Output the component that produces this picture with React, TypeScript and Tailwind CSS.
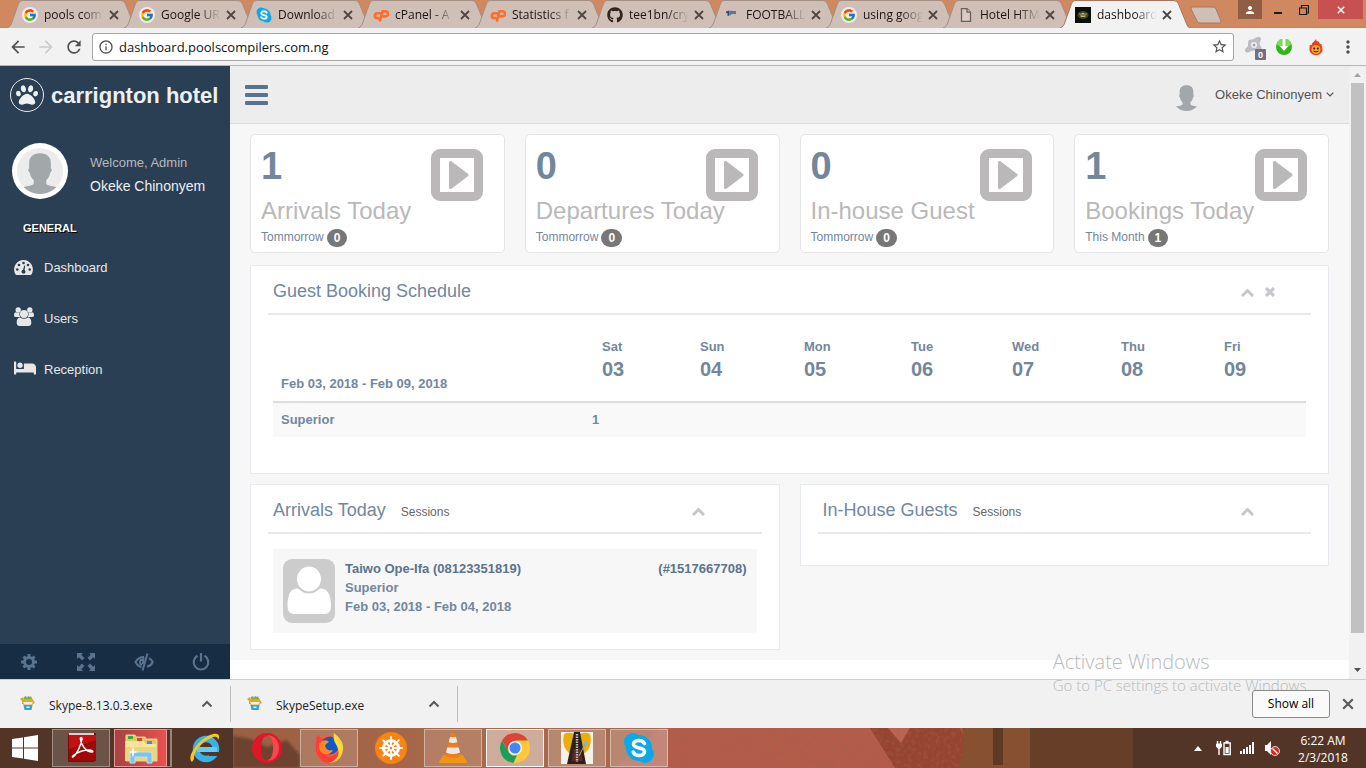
import React from "react";
import { FcGoogle } from "react-icons/fc";
import { FaGithub, FaPaw, FaBed } from "react-icons/fa";
import {
  MdArrowBack,
  MdArrowForward,
  MdRefresh,
  MdInfoOutline,
  MdStarBorder,
  MdMoreVert,
  MdPerson,
} from "react-icons/md";

type TabInfo = { title: string; icon: React.ReactNode; active?: boolean };

const GoogleMark = () => (
  <span className="flex size-4 items-center justify-center rounded-full bg-[#f3ece8]">
    <FcGoogle className="size-[14px]" />
  </span>
);

const SkypeMark = ({ className }: { className: string }) => (
  <svg viewBox="0 0 32 32" className={className} aria-hidden="true">
    <circle cx="10" cy="10" r="9" fill="#0aa9e8" />
    <circle cx="22" cy="22" r="9" fill="#0aa9e8" />
    <circle cx="16" cy="16" r="13" fill="#0aa9e8" />
    <path
      d="M21.500 11.500c-1-2-3.200-3-5.700-3-3 0-5.300 1.400-5.300 3.800 0 5 11 2.500 11 7.200 0 2.500-2.300 4-5.500 4-2.800 0-4.700-1.200-5.700-3.300"
      fill="none"
      stroke="#fff"
      strokeWidth="3.600"
      strokeLinecap="round"
    />
  </svg>
);

const CpanelMark = () => (
  <svg viewBox="0 0 16 16" className="size-4" fill="none" stroke="#ff6c2c" strokeWidth="2.600" aria-hidden="true">
    <path d="M7 6.300H4.200a2.400 2.400 0 0 0 0 4.800H5.500" strokeLinecap="round" />
    <path d="M7 13.500 9.400 4.200h3a2.300 2.300 0 0 1 0 5.200h-2" strokeLinecap="round" strokeLinejoin="round" />
  </svg>
);

const FlagMark = () => (
  <svg viewBox="0 0 16 16" className="size-4" aria-hidden="true">
    <path d="M2 4.500 5.500 3.500v5L3.500 9V6L2 6z" fill="#2c4a6b" />
    <path d="M6 4c2-1 4 .5 6 0v3c-2 .5-3-.5-5 .5l-1 1z" fill="#5b7899" />
  </svg>
);

const DocMark = () => (
  <svg viewBox="0 0 16 16" className="size-4" fill="#d9cdc6" stroke="#6b605b" strokeWidth="1.300" aria-hidden="true">
    <path d="M3.500 1.700h5.500l3.500 3.500v9.100h-9z" />
    <path d="M9 1.700v3.500h3.500" />
  </svg>
);

const SiteMark = () => (
  <svg viewBox="0 0 16 16" className="size-4" aria-hidden="true">
    <rect width="16" height="16" fill="#0a0f0a" />
    <ellipse cx="8" cy="8" rx="5.500" ry="4" fill="#3d4723" />
    <path d="M4.500 6l1.500 1L8 5.500 10 7l1.500-1v1.500h-7zM5 8.500h6l-1 1.500H6z" fill="#c9b777" />
  </svg>
);

const tabs: TabInfo[] = [
  { title: "pools com", icon: <GoogleMark /> },
  { title: "Google UR", icon: <GoogleMark /> },
  { title: "Download", icon: <SkypeMark className="size-4" /> },
  { title: "cPanel - A", icon: <CpanelMark /> },
  { title: "Statistics f", icon: <CpanelMark /> },
  { title: "tee1bn/cry", icon: <FaGithub className="size-4 text-[#33241d]" /> },
  { title: "FOOTBALL", icon: <FlagMark /> },
  { title: "using goog", icon: <GoogleMark /> },
  { title: "Hotel HTM", icon: <DocMark /> },
  { title: "dashboard", icon: <SiteMark />, active: true },
];

function CrossIcon({ className }: { className: string }) {
  return (
    <svg viewBox="0 0 10 10" className={className} fill="none" stroke="currentColor" aria-hidden="true">
      <path d="M1 1l8 8M9 1l-8 8" strokeWidth="1.800" />
    </svg>
  );
}

function BrowserTab({ tab }: { tab: TabInfo }) {
  return (
    <div className={tab.active ? "relative z-10 -mr-[13px] h-7 w-[130px] shrink-0" : "relative -mr-[13px] h-7 w-[130px] shrink-0"}>
      <svg viewBox="0 0 130 28" className="absolute inset-0 size-full" aria-hidden="true">
        <path
          d="M0 28C3 27 4 25 5 22L11 5Q12 .5 15 .5H114Q117 .5 118.500 4L127 25Q128 27.500 130 28"
          fill={tab.active ? "#f2f2f2" : "#d0bfb6"}
          stroke={tab.active ? "#a8765c" : "#a58e83"}
        />
      </svg>
      <div className="relative flex h-full items-center pt-[2px] pr-[18px] pl-[15px]">
        <span className="shrink-0">{tab.icon}</span>
        <button className="ml-[6px] w-[63px] shrink-0 text-left text-[12px] whitespace-nowrap text-[#1c1411] [mask-image:linear-gradient(90deg,#000_60%,transparent_95%)]">
          {tab.title}
        </button>
        <button aria-label="Close tab" className="ml-auto text-[#4f4642]">
          <CrossIcon className="size-[10px]" />
        </button>
      </div>
    </div>
  );
}

function BrowserChrome() {
  return (
    <header className="shrink-0">
      <div className="flex h-7 items-start border-b border-[#a08d84] bg-[#d08861] pl-[7px]">
        {tabs.map((t) => (
          <BrowserTab key={t.title} tab={t} />
        ))}
        <button aria-label="New tab" className="mt-[6px] ml-[12px]">
          <svg viewBox="0 0 34 18" className="h-[18px] w-[34px]" aria-hidden="true">
            <path d="M3 1h21q2 0 3 2l5 12q.5 2-1.500 2H11q-2 0-3-2L2 3q-.5-2 1-2z" fill="#d0bfb6" stroke="#a8795f" />
          </svg>
        </button>
        <div className="ml-auto flex h-[19px] items-center pr-[3px]">
          <button aria-label="Profile" className="flex h-full w-6 items-center justify-center bg-[#8f5e44] text-white">
            <MdPerson className="size-3" />
          </button>
          <button aria-label="Minimize" className="flex h-full w-7 items-center justify-center pl-1 text-[#1a1a1a]">
            <svg viewBox="0 0 8 10" className="h-[10px] w-2" aria-hidden="true">
              <path d="M0 8h8" stroke="currentColor" strokeWidth="2" />
            </svg>
          </button>
          <button aria-label="Restore" className="flex h-full w-7 items-center justify-center text-[#1a1a1a]">
            <svg viewBox="0 0 10 10" className="size-[10px]" fill="none" stroke="currentColor" aria-hidden="true">
              <path d="M.5 3h7v6.500h-7zM2.500 3V.5h7V8h-2" strokeWidth="1.200" />
            </svg>
          </button>
          <button aria-label="Close" className="flex h-full w-[45px] items-center justify-center bg-[#c75050] text-white">
            <CrossIcon className="size-2" />
          </button>
        </div>
      </div>

      <div className="flex h-[38px] items-center border-b border-[#b5b5b5] bg-[#f2f2f2] pl-2">
        <button aria-label="Back" className="text-[#505050]">
          <MdArrowBack className="size-5" />
        </button>
        <button aria-label="Forward" className="ml-2 text-[#cccccc]">
          <MdArrowForward className="size-5" />
        </button>
        <button aria-label="Reload" className="ml-2 text-[#505050]">
          <MdRefresh className="size-5" />
        </button>
        <div className="ml-2 flex h-7 flex-1 items-center rounded-[3px] border border-[#a5a5a5] bg-white px-[5px]">
          <MdInfoOutline className="size-4 text-[#555555]" />
          <input
            aria-label="Address"
            defaultValue="dashboard.poolscompilers.com.ng"
            className="ml-[5px] flex-1 bg-transparent pt-[2px] text-[13px] text-[#111111] outline-none"
          />
          <button aria-label="Bookmark" className="text-[#505050]">
            <MdStarBorder className="size-[17px]" />
          </button>
        </div>
        <div className="flex items-center gap-[10px] pr-2 pl-[10px]">
          <button aria-label="Avast extension">
            <svg viewBox="0 0 22 24" className="mt-[2px] h-6 w-[22px]" aria-hidden="true">
              <path d="M5 4c2 0 3-1 5-1 2-2 7-3 7 0 0 2-2 3-1 6l2 4-5 1c-2 0-3 1-6 1-2 2-7 2-6-1 0-2 3-2 3-5 0-2 0-4 1-5z" fill="#bcbcc6" />
              <circle cx="10" cy="9" r="3" fill="#f2f2f2" />
              <circle cx="10" cy="9" r="1.500" fill="#a5a5b2" />
              <rect x="11" y="13" width="11" height="11" rx="1" fill="#716f80" />
              <text x="14" y="22" fontSize="9" fontWeight="700" fill="#fff" fontFamily="Liberation Sans, sans-serif">0</text>
            </svg>
          </button>
          <button aria-label="Download extension">
            <svg viewBox="0 0 16 16" className="size-4" aria-hidden="true">
              <circle cx="8" cy="8" r="8" fill="#35b51c" />
              <path d="M1 6a7 7 0 0 1 14 0q-7 4-14 0z" fill="#7ddb55" />
              <path d="M6.600 0h2.800v7h3L8 12 3.600 7h3z" fill="#fff" />
            </svg>
          </button>
          <button aria-label="Fire extension" className="ml-[6px]">
            <svg viewBox="0 0 16 16" className="size-4" aria-hidden="true">
              <path d="M8 0c0 2 2 3 3 2.500 0 2 1 3 3 3-1 1 .5 3 .5 5 0 3.500-3 5.500-6.500 5.500s-6.500-2-6.500-5.500c0-2 0-3 .5-5 1 1 2 1 2-1C5 3 7 2 8 0z" fill="#e4431b" />
              <circle cx="8" cy="10.500" r="4.500" fill="#fda52a" />
              <circle cx="6.200" cy="9.500" r="1" fill="#451506" />
              <circle cx="9.800" cy="9.500" r="1" fill="#451506" />
              <path d="M5.500 12q2.500 2 5 0" stroke="#451506" fill="none" />
            </svg>
          </button>
          <button aria-label="Menu" className="ml-1 text-[#505050]">
            <MdMoreVert className="size-5" />
          </button>
        </div>
      </div>
    </header>
  );
}

function Silhouette({ className }: { className: string }) {
  return (
    <svg viewBox="0 0 48 48" className={className} aria-hidden="true">
      <path
        d="M24 5.500c-7.500 0-11.300 4-11.300 10.500v5c-1.400.3-1.200 3.500.6 4.500.6 3.500 1.600 5.500 4.200 8v3.500c-1 3-12 2.500-15 6V48h43v-5c-3-3.500-14-3-15-6v-3.500c2.600-2.500 3.600-4.500 4.200-8 1.800-1 2-4.200.6-4.500v-5C35.300 9.500 31.500 5.500 24 5.500z"
        fill="#a2a7aa"
      />
    </svg>
  );
}

const DialIcon = () => (
  <svg viewBox="0 0 19 15" className="h-[15px] w-[19px]" aria-hidden="true">
    <path d="M9.500 0a9.400 9.400 0 0 0-8.200 14q.4 1 1.300 1h13.800q.9 0 1.300-1A9.400 9.400 0 0 0 9.500 0z" fill="#e7e7e7" />
    <g fill="#2a3f54">
      <circle cx="3.300" cy="9.500" r="1.300" />
      <circle cx="5" cy="5" r="1.300" />
      <circle cx="9.500" cy="3" r="1.300" />
      <circle cx="14" cy="5" r="1.300" />
      <circle cx="15.700" cy="9.500" r="1.300" />
      <path d="M10.200 5.500l1 .3-.6 4.200a2 2 0 1 1-1.500-.3z" />
    </g>
  </svg>
);

const UsersIcon = () => (
  <svg viewBox="0 0 20 19" className="mb-1 h-[19px] w-5" fill="#e7e7e7" aria-hidden="true">
    <circle cx="4.200" cy="3" r="2.700" />
    <circle cx="15.800" cy="3" r="2.700" />
    <path d="M0 8.500C0 6.500.8 5.300 2 5.300q2 1 3.600.3Q5 8.500 6.200 10H2Q0 10 0 8.500zM20 8.500c0-2-.8-3.200-2-3.200q-2 1-3.600.3.600 2.900-.6 4.400H18q2 0 2-1.500z" />
    <circle cx="10" cy="7" r="4" />
    <path d="M2.700 15.500c0-3 1-5 3.300-5q4 2.500 8 0c2.300 0 3.300 2 3.300 5q0 3.500-3 3.500H5.700q-3 0-3-3.500z" />
  </svg>
);

const menu = [
  { label: "Dashboard", icon: <DialIcon /> },
  { label: "Users", icon: <UsersIcon /> },
  { label: "Reception", icon: <FaBed className="mb-1 h-[18px] w-[22px] text-[#e7e7e7]" /> },
];

function Sidebar() {
  return (
    <aside className="flex w-[230px] shrink-0 flex-col bg-[#2a3f54] text-[#ecf0f1]">
      <a href="#home" className="flex h-[58px] items-center pl-[10px]">
        <span className="flex size-[34px] shrink-0 items-center justify-center rounded-full border border-[#eaeaea]">
          <FaPaw className="size-[22px]" />
        </span>
        <span className="ml-[7px] text-[22px] font-bold whitespace-nowrap">carrignton hotel</span>
      </a>
      <div className="mt-[19px] flex items-center pl-3">
        <span className="flex size-14 items-center justify-center rounded-full bg-white p-[5px]">
          <Silhouette className="size-full rounded-full bg-[#ececec]" />
        </span>
        <div className="mt-[7px] ml-[22px]">
          <p className="text-[13px] leading-[22px] text-[#bab8b8]">Welcome, Admin</p>
          <p className="text-[14px] leading-6">Okeke Chinonyem</p>
        </div>
      </div>
      <nav>
        <h3 className="mt-[21px] pl-[23px] text-[11px] leading-4 font-bold text-white uppercase [text-shadow:1px_1px_#000]">General</h3>
        <ul className="mt-[6px]">
          {menu.map((m) => (
            <li key={m.label}>
              <a href={"#" + m.label} className="flex h-[51px] items-center pl-[14px] text-[13px] text-[#e7e7e7]">
                <span className="w-[30px]">{m.icon}</span>
                {m.label}
              </a>
            </li>
          ))}
        </ul>
      </nav>
      <div className="mt-auto grid h-[35px] grid-cols-4 bg-[#172d44] text-[#5a738e]">
        <button aria-label="Settings" className="flex items-center justify-center">
          <svg viewBox="0 0 18 18" className="size-[18px]" aria-hidden="true">
            <g stroke="currentColor" strokeWidth="3">
              <path d="M9 1v16M1 9h16M3.500 3.500l11 11M14.500 3.500l-11 11" />
            </g>
            <circle cx="9" cy="9" r="6" fill="currentColor" />
            <circle cx="9" cy="9" r="3" fill="#172d44" />
          </svg>
        </button>
        <button aria-label="FullScreen" className="flex items-center justify-center">
          <svg viewBox="0 0 18 18" className="size-[18px]" aria-hidden="true">
            <path
              d="M0 0h6L4.300 1.800 7.500 5 5 7.500 1.800 4.300 0 6zM18 0h-6l1.700 1.800L10.500 5 13 7.500l3.200-3.200L18 6zM0 18h6l-1.700-1.800L7.500 13 5 10.500l-3.200 3.200L0 12zM18 18h-6l1.700-1.800-3.200-3.200 2.500-2.500 3.200 3.200L18 12z"
              fill="currentColor"
            />
          </svg>
        </button>
        <button aria-label="Lock" className="flex items-center justify-center">
          <svg viewBox="0 0 20 18" className="h-[18px] w-5" fill="none" stroke="currentColor" strokeWidth="2" aria-hidden="true">
            <path d="M10 4Q4.500 4 1.500 9q2.200 4.300 6 5M15 5.200Q17.500 6.700 18.800 9q-1.800 3.800-5.800 4.800" />
            <path d="M13.500.5L8.500 17.500" />
            <path d="M9 6.500q-3 0-3 2.800 0 2 2 2.700M9.500 4.500L9 11" />
          </svg>
        </button>
        <button aria-label="Logout" className="flex items-center justify-center">
          <svg viewBox="0 0 18 18" className="size-[18px]" fill="none" stroke="currentColor" strokeWidth="2.200" aria-hidden="true">
            <path d="M5.500 2.800a7.300 7.300 0 1 0 7 0" />
            <path d="M9 0v8.500" />
          </svg>
        </button>
      </div>
    </aside>
  );
}

const stats = [
  { value: 1, label: "Arrivals Today", note: "Tommorrow", badge: 0 },
  { value: 0, label: "Departures Today", note: "Tommorrow", badge: 0 },
  { value: 0, label: "In-house Guest", note: "Tommorrow", badge: 0 },
  { value: 1, label: "Bookings Today", note: "This Month", badge: 1 },
];

function StatCard({ value, label, note, badge }: (typeof stats)[number]) {
  return (
    <section className="relative h-[119px] rounded-[5px] border border-[#e4e4e4] bg-white px-[10px] pt-[11px]">
      <svg viewBox="0 0 52 52" className="absolute top-[14px] right-[21px] size-[52px]" aria-hidden="true">
        <rect x="4.500" y="4.500" width="43" height="43" rx="4.500" fill="none" stroke="#bab8b8" strokeWidth="9" />
        <path d="M19.500 13.500v25L36 26z" fill="#bab8b8" stroke="#bab8b8" strokeWidth="3" strokeLinejoin="round" />
      </svg>
      <div className="text-[38px] leading-10 font-bold">{value}</div>
      <h3 className="relative mt-[10px] text-[24px] leading-[30px] whitespace-nowrap text-[#bab8b8]">{label}</h3>
      <p className="mt-[2px] flex items-start gap-[3px] text-[12px] leading-[18px]">
        {note}
        <span className="mt-[1px] rounded-[10px] bg-[#777777] px-[7px] font-bold text-white">{badge}</span>
      </p>
    </section>
  );
}

function Panel(props: { title: string; sub?: string; closable?: boolean; className: string; children?: React.ReactNode }) {
  return (
    <section className={props.className}>
      <div className="flex h-[39px] border-b-2 border-[#e6e9ed] pl-[5px]">
        <h2 className="text-[18px] leading-[30px] whitespace-nowrap">
          {props.title}
          {props.sub && <small className="ml-[15px] text-[12px] text-[#666666]">{props.sub}</small>}
        </h2>
        <div className="ml-auto flex h-8 w-[70px] items-center gap-[11px] text-[#c5c7cb]">
          <button aria-label="Collapse">
            <svg viewBox="0 0 13 9" className="h-[9px] w-[13px]" fill="none" stroke="currentColor" strokeWidth="3" aria-hidden="true">
              <path d="M1 8l5.500-5.500L12 8" />
            </svg>
          </button>
          {props.closable && (
            <button aria-label="Close">
              <svg viewBox="0 0 10 10" className="size-[10px]" fill="none" stroke="currentColor" strokeWidth="3.200" aria-hidden="true">
                <path d="M1 1l8 8M9 1L1 9" />
              </svg>
            </button>
          )}
        </div>
      </div>
      <div className="px-[5px]">{props.children}</div>
    </section>
  );
}

const days = [
  { day: "Sat", date: "03", count: "1" },
  { day: "Sun", date: "04", count: "" },
  { day: "Mon", date: "05", count: "" },
  { day: "Tue", date: "06", count: "" },
  { day: "Wed", date: "07", count: "" },
  { day: "Thu", date: "08", count: "" },
  { day: "Fri", date: "09", count: "" },
];

function Schedule() {
  return (
    <table className="mt-[14px] w-full table-fixed text-left text-[13px] font-bold">
      <colgroup>
        <col className="w-[311px]" />
        <col className="w-[98px]" />
        <col className="w-[104px]" />
        <col className="w-[107px]" />
        <col className="w-[101px]" />
        <col className="w-[109px]" />
        <col className="w-[103px]" />
        <col className="w-[100px]" />
      </colgroup>
      <thead>
        <tr className="h-[73px] border-b-2 border-[#dddddd]">
          <th className="px-2 pb-2 align-bottom">Feb 03, 2018 - Feb 09, 2018</th>
          {days.map((d) => (
            <th key={d.day} className="pl-[18px] align-top">
              <div className="pt-2 leading-5">{d.day}</div>
              <div className="text-[20px] leading-6">{d.date}</div>
            </th>
          ))}
        </tr>
      </thead>
      <tbody>
        <tr className="h-[35px] bg-[#f9f9f9]">
          <td className="px-2">Superior</td>
          {days.map((d) => (
            <td key={d.day} className="px-2">{d.count}</td>
          ))}
        </tr>
      </tbody>
    </table>
  );
}

function Dashboard() {
  return (
    <main className="flex min-w-0 flex-1 flex-col bg-white text-[#73879c]">
      <div className="flex h-[58px] shrink-0 items-center border-b border-[#d9dee4] bg-[#ededed] px-[15px]">
        <button aria-label="Toggle menu" className="text-[#5a738e]">
          <svg viewBox="0 0 23 20" className="h-5 w-[23px]" fill="currentColor" aria-hidden="true">
            <rect width="23" height="4" rx="1" />
            <rect y="8" width="23" height="4" rx="1" />
            <rect y="16" width="23" height="4" rx="1" />
          </svg>
        </button>
        <button className="ml-auto flex items-center text-[13px] text-[#515356]">
          <Silhouette className="mt-1 mr-[14px] size-[29px] rounded-full" />
          Okeke Chinonyem
          <svg viewBox="0 0 8 5" className="ml-1 h-[5px] w-2" fill="none" stroke="currentColor" aria-hidden="true">
            <path d="M.7.700L4 4 7.300.700" strokeWidth="1.200" />
          </svg>
        </button>
      </div>
      <div className="bg-[#f7f7f7] px-5 pt-[10px] pb-[10px]">
        <div className="grid grid-cols-4 gap-5">
          {stats.map((s) => (
            <StatCard key={s.label} {...s} />
          ))}
        </div>
        <Panel title="Guest Booking Schedule" closable className="mt-3 border border-[#e6e9ed] bg-white px-[17px] pt-[10px] pb-9">
          <Schedule />
        </Panel>
        <div className="mt-[10px] grid grid-cols-2 items-start gap-5">
          <Panel title="Arrivals Today" sub="Sessions" className="border border-[#e6e9ed] bg-white px-[17px] pt-[10px] pb-4">
            <article className="mt-[15px] flex h-[84px] bg-[#f7f7f7] p-[10px] text-[13px] leading-[19px] font-bold">
              <svg viewBox="0 0 52 64" className="h-16 w-[52px] shrink-0" aria-hidden="true">
                <rect width="52" height="64" rx="9" fill="#cccccc" />
                <path d="M4.500 47c0-12 3-17.500 10.500-17.500Q26 38 37 29.500C44.500 29.500 48 35 48 47q0 8-6.500 8H11q-6.500 0-6.500-8z" fill="#fff" />
                <ellipse cx="26" cy="20" rx="13" ry="13.500" fill="#fff" stroke="#cccccc" strokeWidth="2" />
              </svg>
              <div className="ml-[10px] flex-1">
                <div className="flex justify-between text-[#5a738e]">
                  <a href="#guest">Taiwo Ope-Ifa (08123351819)</a>
                  <a href="#booking">(#1517667708)</a>
                </div>
                <p>Superior</p>
                <p>Feb 03, 2018 - Feb 04, 2018</p>
              </div>
            </article>
          </Panel>
          <Panel title="In-House Guests" sub="Sessions" className="h-[82px] border border-[#e6e9ed] bg-white px-[17px] pt-[10px]" />
        </div>
      </div>
    </main>
  );
}

function ScrollRail() {
  return (
    <div className="flex w-[17px] shrink-0 flex-col items-center bg-[#f1f1f1]" aria-hidden="true">
      <svg viewBox="0 0 17 17" className="size-[17px]">
        <path d="M5 11l3.500-4L12 11z" fill="#a3a3a3" />
      </svg>
      <div className="w-[13px] flex-1 bg-[#c1c1c1]" />
      <div className="h-[29px]" />
      <svg viewBox="0 0 17 17" className="size-[17px]">
        <path d="M5 6l3.500 4L12 6z" fill="#505050" />
      </svg>
    </div>
  );
}

const SetupIcon = () => (
  <svg viewBox="0 0 16 16" className="size-4" aria-hidden="true">
    <path d="M0 3l3-2 1 2 8-1 3 5-2 1H2L2 5z" fill="#e0a638" />
    <path d="M4 1l2-1 1 2 1-2 2 1 1-1 1 3H4z" fill="#79ae49" />
    <path d="M2.500 5.500h11L12 9H4z" fill="#fbf3dd" stroke="#d99a2b" strokeWidth=".8" />
    <path d="M3.500 9h9l-1 5h-7z" fill="#2aa5dd" />
    <path d="M6.500 10.500h3v1.500h-3z" fill="#fff" />
  </svg>
);

function DownloadShelf() {
  return (
    <footer className="relative flex h-[49px] shrink-0 items-center border-t border-[#cfcfcf] bg-[#f1f1f1] pr-3">
      {["Skype-8.13.0.3.exe", "SkypeSetup.exe"].map((name) => (
        <div key={name} className="flex h-9 w-[227px] items-center border-r border-[#bfbfbf] pr-[17px] pl-4 first:w-[231px] first:pl-5">
          <SetupIcon />
          <button className="ml-[13px] pt-1 text-[12px] text-[#222222]">{name}</button>
          <button aria-label={"Options for " + name} className="ml-auto text-[#5a5a5a]">
            <svg viewBox="0 0 12 8" className="h-2 w-3" fill="none" stroke="currentColor" strokeWidth="2" aria-hidden="true">
              <path d="M1.500 6.500L6 2l4.500 4.500" />
            </svg>
          </button>
        </div>
      ))}
      <button className="relative z-20 ml-auto h-7 w-[78px] rounded-[3px] border border-[#8a8a8a] bg-[#fafafa] text-[12px] text-black">
        Show all
      </button>
      <button aria-label="Close shelf" className="ml-3 text-[#5a5a5a]">
        <CrossIcon className="size-3" />
      </button>
      <div className="pointer-events-none absolute right-14 bottom-8 z-10 text-[#b9b9b9]">
        <p className="text-[20px] leading-6 font-light">Activate Windows</p>
        <p className="text-[15px] leading-[22px] font-light whitespace-nowrap">Go to PC settings to activate Windows.</p>
      </div>
    </footer>
  );
}

const AdobeIcon = () => (
  <svg viewBox="0 0 32 32" className="size-8" aria-hidden="true">
    <path d="M3 3l2-2h26v27l-2 2H3z" fill="#7d0a0a" />
    <path d="M4 1h25v3H4z" fill="#d6d0ce" />
    <rect x="4" y="3" width="27" height="26" fill="#c60f0f" />
    <path d="M4 17L31 8v21H4z" fill="#9e0808" />
    <path d="M8 25c3-2 8-11 9-18 .3-2-2-2-1.600 0C16 13 21 20 27 20c2-.5 0-2-3-2-5 0-11 2-15 5-1.500 1-2 2-1 2z" fill="none" stroke="#fff" strokeWidth="1.500" />
  </svg>
);

const ExplorerIcon = () => (
  <svg viewBox="0 0 34 32" className="h-8 w-[34px]" aria-hidden="true">
    <path d="M2 3h9l1 2h9l1 2h11v22H2z" fill="#e4c667" stroke="#f8eab0" strokeWidth=".8" />
    <path d="M4 4h5v3H4z" fill="#2fae43" />
    <path d="M13 6h5v3h-5z" fill="#d94931" />
    <path d="M23 9h5v3h-5z" fill="#3c8fd8" />
    <path d="M1 9h19l2 3h10v17H1z" fill="#f6e59d" />
    <path d="M1 15h31v14H1z" fill="#eed57c" />
    <path d="M6 31V23q0-3 3-3h16q3 0 3 3v8h-5v-6H11v6z" fill="#7cc5e6" stroke="#b9e3f4" />
    <path d="M9 14l1 5 4 1-4 1-1 5-1-5-4-1 4-1z" fill="#fff" />
  </svg>
);

const IeIcon = () => (
  <svg viewBox="0 0 32 32" className="size-8" aria-hidden="true">
    <circle cx="17" cy="17" r="10" fill="none" stroke="#35b2ea" strokeWidth="6.500" />
    <path d="M8 15h20v5H8z" fill="#5fcdf5" />
    <path d="M19 20h13v4H20z" fill="#533425" />
    <path d="M3 30C-3 25 9 8 21 3c8-3 11 0 8 5 0-4-3-4-7-2C12 10 4 21 5 27z" fill="#f6c623" />
  </svg>
);

const OperaIcon = () => (
  <svg viewBox="0 0 30 32" className="h-8 w-[30px]" aria-hidden="true">
    <path fillRule="evenodd" d="M15 1a15 15 0 1 0 0 30 15 15 0 0 0 0-30zm0 3c4 0 6 5 6 12s-2 12-6 12-6-5-6-12 2-12 6-12z" fill="#e01729" />
    <path d="M15 4c4 0 6 5 6 12s-2 12-6 12c6 2 12-4 12-12S21 2 15 4z" fill="#f5474e" />
  </svg>
);

const FirefoxIcon = () => (
  <svg viewBox="0 0 32 32" className="size-8" aria-hidden="true">
    <circle cx="16" cy="17" r="14" fill="#ff5a2b" />
    <path d="M3 10Q3 4 5 3l4 4q4-2 7 1l-3 16q9 3 15-9c0 9-5 16-12 16S1 24 3 10z" fill="#ff3d3a" />
    <circle cx="17" cy="13.500" r="9" fill="#1059c9" />
    <path d="M9 9q5-2 7 1l-4 3q1 7 8 5-2 5-9 4-6-3-5-10z" fill="#ff8a24" />
    <path d="M21 1c6 5 10 10 9 17-1 8-7 13-14 13 8-3 11-8 9-14-1-5-6-8-4-16z" fill="#ffd93b" />
  </svg>
);

const WheelIcon = () => (
  <svg viewBox="0 0 32 32" className="size-8" aria-hidden="true">
    <circle cx="16" cy="16" r="16" fill="#fb8312" />
    <g stroke="#fff" strokeWidth="2" strokeLinecap="round">
      <path d="M16 5v22M5 16h22M8.200 8.200l15.600 15.600M23.800 8.200L8.200 23.800" />
    </g>
    <circle cx="16" cy="16" r="7.500" fill="none" stroke="#fff" strokeWidth="3" />
    <circle cx="16" cy="16" r="3" fill="#fff" />
    <circle cx="16" cy="16" r="1.300" fill="#fb8312" />
  </svg>
);

const ConeIcon = () => (
  <svg viewBox="0 0 28 32" className="h-8 w-7" aria-hidden="true">
    <path d="M4 23h20l4 7q0 1-1 1H1q-1 0-1-1z" fill="#f49414" />
    <path d="M12 1h4l6 23q-8 4-16 0z" fill="#ef7d18" />
    <path d="M11 5h6l1.300 5q-4.300 2-8.600 0zM8.300 15.500h11.400L21 20.500q-7 3-14 0z" fill="#e9e9ea" />
  </svg>
);

const ChromeIcon = () => (
  <svg viewBox="0 0 32 32" className="size-8" aria-hidden="true">
    <circle cx="16" cy="16" r="15" fill="#fdc93a" />
    <path d="M3 8.500A15 15 0 0 1 29 8.500H16L9.500 20z" fill="#db4437" />
    <path d="M3 8.500L9.500 20A7.500 7.500 0 0 0 18 23.200L14.500 31A15 15 0 0 1 3 8.500z" fill="#1c9d58" />
    <circle cx="16" cy="16" r="7" fill="#f3f3f3" />
    <circle cx="16" cy="16" r="5.500" fill="#4285f4" />
  </svg>
);

const ZipIcon = () => (
  <svg viewBox="0 0 32 32" className="size-8" aria-hidden="true">
    <rect width="32" height="32" fill="#f6f1e8" />
    <path d="M3 2Q9-1 15 3l-2 16-5 2Q0 14 3 2zM17 3q6-4 12-1 3 12-5 19l-5-2z" fill="#e9ae0b" />
    <path d="M13 0h6l6 32H6z" fill="#2c201c" />
    <path d="M12.500 17h7l2 12h-11z" fill="#5e2823" />
    <path d="M16 2v28" stroke="#b9bfc4" strokeWidth="2.400" strokeDasharray="1.500 1" />
    <circle cx="24" cy="12" r="2.500" fill="#8db2c6" />
    <path d="M24 12L18 24" stroke="#9aa" />
  </svg>
);

const apps = [
  { name: "Adobe Reader", icon: <AdobeIcon />, tile: "w-[58px] border-white/35 bg-white/15" },
  { name: "File Explorer", icon: <ExplorerIcon />, tile: "mr-[5px] w-[53px] border-[#e59a9a] bg-linear-to-r from-[#a94242] to-[#ea5050] outline-offset-[-1px] shadow-[4px_0_0_-1px_#533527,5px_0_0_0_#9a8478]" },
  { name: "Internet Explorer", icon: <IeIcon />, tile: "w-[58px] border-transparent" },
  { name: "Opera", icon: <OperaIcon />, tile: "w-[58px] border-transparent" },
  { name: "Firefox", icon: <FirefoxIcon />, tile: "w-[58px] border-white/40 bg-white/15" },
  { name: "Helm", icon: <WheelIcon />, tile: "w-[58px] border-transparent" },
  { name: "VLC", icon: <ConeIcon />, tile: "w-[58px] border-white/40 bg-white/15" },
  { name: "Chrome", icon: <ChromeIcon />, tile: "w-[58px] border-white/90 bg-white/45" },
  { name: "Tuner", icon: <ZipIcon />, tile: "w-[58px] border-white/40 bg-white/20" },
  { name: "Skype", icon: <SkypeMark className="size-8" />, tile: "w-[58px] border-white/40 bg-white/20" },
];

function TaskbarBackdrop() {
  return (
    <svg viewBox="0 0 1366 40" preserveAspectRatio="none" className="absolute inset-0 size-full" aria-hidden="true">
      <defs>
        <filter id="grain" x="0" y="0" width="100%" height="100%">
          <feTurbulence type="fractalNoise" baseFrequency="0.25" numOctaves="2" seed="4" />
          <feColorMatrix values="0 0 0 0 .35  0 0 0 0 .12  0 0 0 0 .08  0 0 0 3 -1.200" />
        </filter>
        <filter id="soft">
          <feGaussianBlur stdDeviation="1.500" />
        </filter>
        <linearGradient id="sand">
          <stop offset="0" stopColor="#995f43" />
          <stop offset=".5" stopColor="#a8694b" />
          <stop offset="1" stopColor="#a56a50" />
        </linearGradient>
      </defs>
      <rect width="1366" height="40" fill="#533527" />
      <rect x="233" width="435" height="40" fill="url(#sand)" />
      <path d="M233 8l18 3 16 8 20-7 13 15v13h-67z" fill="#6d432e" filter="url(#soft)" />
      <rect y="0" width="233" height="40" fill="#533527" />
      <path d="M615 40l45-40h15v40z" fill="#b46a58" filter="url(#soft)" />
      <rect x="668" width="297" height="40" fill="#b45c4a" />
      <path d="M870 0h90q10 20 0 40h-65z" fill="#96432f" />
      <path d="M888 0h22l-9 15z" fill="#bc6450" />
      <rect x="668" width="294" height="40" filter="url(#grain)" opacity=".35" />
      <path d="M962 0h71v40h-75q8-20 4-40z" fill="#875030" />
      <rect x="993" width="10" height="37" fill="#5e3925" />
      <rect x="1030" width="103" height="40" fill="#673f28" />
    </svg>
  );
}

function Taskbar() {
  return (
    <footer className="relative flex h-10 shrink-0 items-center bg-[#533527]">
      <TaskbarBackdrop />
      <div className="relative flex h-full flex-1 items-center">
        <button aria-label="Start" className="flex w-[50px] items-center justify-center">
          <svg viewBox="0 0 26 26" className="size-[26px]" fill="#fff" aria-hidden="true">
            <path d="M0 4l11-1.600V12.500H0zM12 2.200L26 0v12.500H12zM0 13.500h11v10L0 22zM12 13.500h14V26l-14-2.200z" />
          </svg>
        </button>
        <div className="flex h-full items-center gap-1 pl-[2px]">
          {apps.map((a) => (
            <button key={a.name} aria-label={a.name} className={"flex h-[38px] items-center justify-center border " + a.tile}>
              {a.icon}
            </button>
          ))}
        </div>
        <div className="ml-auto flex items-center text-white">
          <svg viewBox="0 0 8 5" className="h-[5px] w-2" fill="#fff" aria-hidden="true">
            <path d="M0 5l4-5 4 5z" />
          </svg>
          <svg viewBox="0 0 15 16" className="ml-[14px] h-4 w-[15px]" fill="none" stroke="#fff" aria-hidden="true">
            <path d="M1.500 1v3M4.500 1v3M3 8v7" strokeWidth="1.400" />
            <path d="M.5 4h5v2.500L4 8.500H2L.5 6.500z" fill="#fff" />
            <path d="M8 3h6.200v11.500H8zM9.500 1.500h3" strokeWidth="1.400" />
            <path d="M9.500 7h3.200v6H9.500z" fill="#fff" stroke="none" />
          </svg>
          <svg viewBox="0 0 15 12" className="ml-[9px] h-3 w-[15px]" fill="#fff" aria-hidden="true">
            <path d="M0 9h2v3H0zM3 7h2v5H3zM6 5h2v7H6zM9 3h2v9H9zM12 0h2v12h-2z" />
          </svg>
          <svg viewBox="0 0 16 16" className="ml-[9px] size-4" aria-hidden="true">
            <path d="M1 5h2l4-4v14l-4-4H1z" fill="#fff" />
            <circle cx="11" cy="11" r="4.500" fill="#e02323" stroke="#fff" strokeWidth=".8" />
            <path d="M8.500 8.500l5 5" stroke="#fff" strokeWidth="1.400" />
          </svg>
          <div className="w-[86px] pt-[2px] text-center text-[12px] leading-[17px]">
            <div>6:22 AM</div>
            <div>2/3/2018</div>
          </div>
        </div>
      </div>
    </footer>
  );
}

export default function App() {
  return (
    <div className="flex h-screen flex-col overflow-hidden bg-white font-['Open_Sans','Noto_Sans',sans-serif]">
      <BrowserChrome />
      <div className="flex min-h-0 flex-1 font-['Liberation_Sans',Arial,sans-serif]">
        <Sidebar />
        <Dashboard />
        <ScrollRail />
      </div>
      <DownloadShelf />
      <Taskbar />
    </div>
  );
}
